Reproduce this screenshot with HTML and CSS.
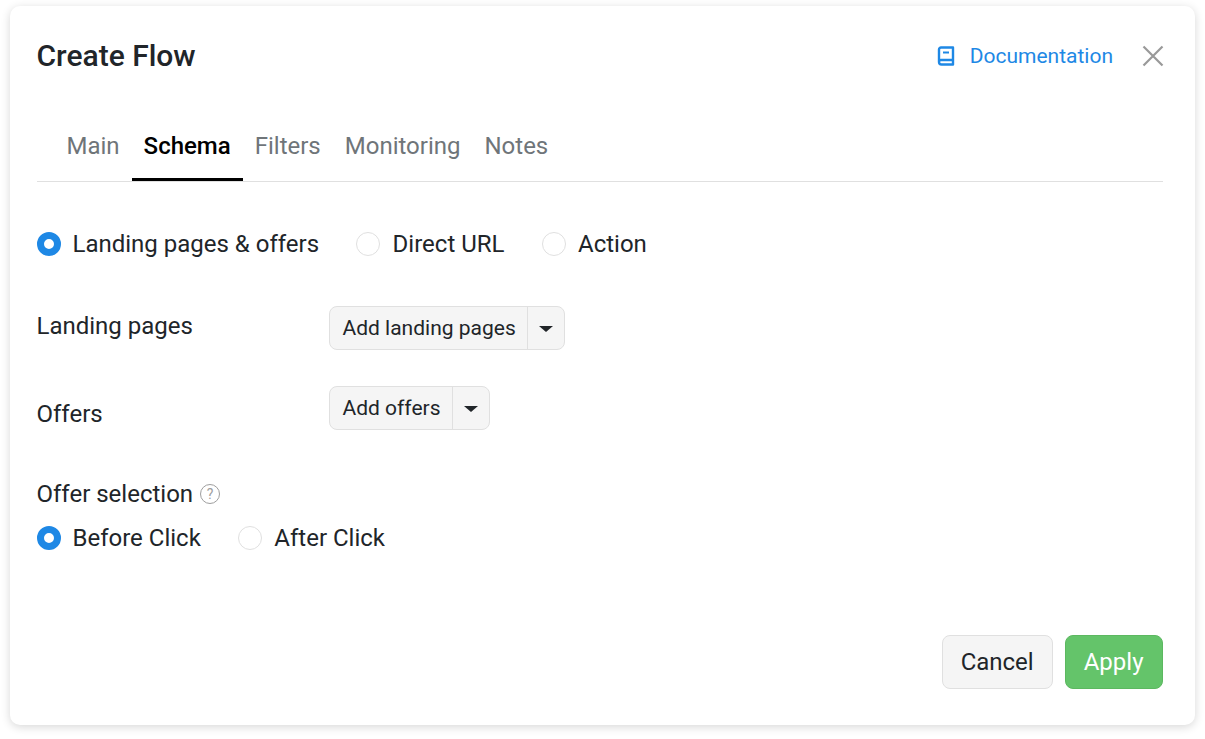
FILE: index.html
```html
<!DOCTYPE html>
<html lang="en">
<head>
<meta charset="utf-8">
<title>Create Flow</title>
<link rel="stylesheet" href="styles.css">
</head>
<body>
<div class="modal">
  <header class="head">
    <h1 class="title">Create Flow</h1>
    <div class="head-actions">
      <a class="doc-link">
        <svg class="doc-icon" width="18" height="20" viewBox="0 0 18 20" fill="none" stroke="#1e88e5" stroke-width="2.4" stroke-linejoin="round"><path d="M2 15.5V3.5A2 2 0 0 1 4 1.5H16V18.5H4.5A2.5 2.5 0 0 1 2 16V15.5A2 2 0 0 1 4 14H16"/><path d="M6 6.5H12" stroke-width="2"/></svg>
        <span>Documentation</span>
      </a>
      <svg class="close" width="22" height="22" viewBox="0 0 22 22" fill="none" stroke="#999" stroke-width="2.2"><path d="M1.5 1.5L20.5 20.5M20.5 1.5L1.5 20.5"/></svg>
    </div>
  </header>
  <nav class="tabs">
    <span class="tab">Main</span>
    <span class="tab active">Schema</span>
    <span class="tab">Filters</span>
    <span class="tab">Monitoring</span>
    <span class="tab">Notes</span>
  </nav>
  <div class="radios schema-radios">
    <label class="radio on"><i class="dot"></i>Landing pages &amp; offers</label>
    <label class="radio"><i class="dot"></i>Direct URL</label>
    <label class="radio radio-action"><i class="dot"></i>Action</label>
  </div>
  <div class="row row-landing">
    <div class="label">Landing pages</div>
    <div class="split"><span class="split-main">Add landing pages</span><span class="split-caret"><i class="caret"></i></span></div>
  </div>
  <div class="row row-offers">
    <div class="label label-offers">Offers</div>
    <div class="split"><span class="split-main">Add offers</span><span class="split-caret"><i class="caret"></i></span></div>
  </div>
  <div class="selection-label">Offer selection <span class="help">?</span></div>
  <div class="radios selection-radios">
    <label class="radio on"><i class="dot"></i>Before Click</label>
    <label class="radio"><i class="dot"></i>After Click</label>
  </div>
  <footer class="foot">
    <button class="btn">Cancel</button>
    <button class="btn primary">Apply</button>
  </footer>
</div>
</body>
</html>
```
FILE: styles.css
```css
* { box-sizing: border-box; }
html, body { margin: 0; height: 100%; background: #fff; }
body {
  font-family: Roboto, sans-serif;
  color: #212529;
  padding: 6px 10px 14px;
  overflow: hidden;
}
.modal {
  width: 1185px;
  height: 719px;
  background: #fff;
  border-radius: 10px;
  box-shadow: 0 2px 10px rgba(0, 0, 0, .16);
  padding: 0 32px 36px 27px;
  display: flex;
  flex-direction: column;
}
.head {
  display: flex;
  justify-content: space-between;
  align-items: center;
  height: 100px;
  margin-right: -1px;
}
.title { margin: 0 0 0 -.5px; font-size: 30px; font-weight: 500; line-height: 36px; color: #212529; }
.head-actions { display: flex; align-items: center; gap: 29px; }
.doc-link { display: flex; align-items: center; gap: 15px; font-size: 21px; color: #1e88e5; }
.doc-icon { display: block; }
.close { display: block; }
.tabs {
  display: flex;
  height: 76px;
  padding: 0 17.5px;
  border-bottom: 1px solid #e0e0e0;
}
.tab {
  padding: 5px 12px 0;
  font-size: 24px;
  line-height: 70px;
  color: #6f7579;
  height: 75px;
}
.active { color: #000; font-weight: 500; border-bottom: 3px solid #000; }
.radios { display: flex; }
.schema-radios { margin-top: 44px; gap: 37px; }
.radio { display: flex; align-items: center; gap: 12.5px; font-size: 24px; line-height: 36px; color: #212529; }
.radio.on { gap: 11.5px; }
.radio-action { gap: 12px; margin-left: .5px; }
.dot {
  width: 24px; height: 24px; border-radius: 50%;
  border: 1px solid #e0e0e0; background: #fff;
}
.on .dot { border: 7px solid #1e88e5; }
.row { display: flex; align-items: flex-start; }
.row-landing { margin-top: 44px; }
.row-offers { margin-top: 36px; }
.label { margin-left: -.5px; font-size: 24px; line-height: 40px; flex: 0 0 292.5px; }
.label-offers { padding-top: 8px; }
.split {
  display: flex;
  height: 44px;
  border: 1px solid #e0e0e0;
  border-radius: 8px;
  background: #f5f5f5;
  font-size: 21px;
  line-height: 42px;
}
.split-main { padding: 0 11.5px 0 12.5px; border-right: 1px solid #e0e0e0; }
.split-caret { width: 36px; display: flex; align-items: center; justify-content: center; }
.caret { width: 0; height: 0; border-left: 7px solid transparent; border-right: 7px solid transparent; border-top: 6px solid #212529; margin-top: 2px; }
.selection-label { margin: 38px 0 0 -.5px; display: flex; align-items: center; gap: 7px; font-size: 24px; line-height: 44px; }
.help {
  width: 20px; height: 20px; border-radius: 50%;
  border: 1px solid #9e9e9e; color: #9e9e9e;
  font-size: 14px; line-height: 18px; text-align: center;
}
.selection-radios { gap: 37px; margin-top: 4px; }
.foot { margin-top: auto; display: flex; justify-content: flex-end; gap: 12px; }
.btn {
  height: 54px; padding: 0 18.5px 0 17.5px;
  font: 400 24px Roboto, sans-serif;
  color: #212529;
  background: #f5f5f5;
  border: 1px solid #e0e0e0;
  border-radius: 8px;
}
.primary { background: #64c46a; border-color: #5cb860; color: #fff; }
```
